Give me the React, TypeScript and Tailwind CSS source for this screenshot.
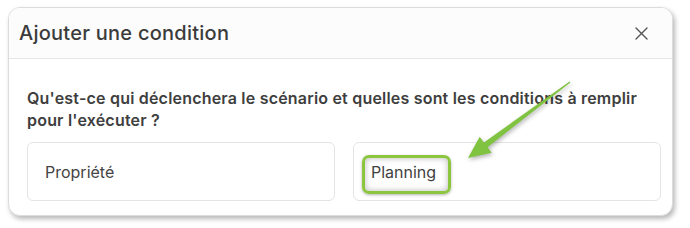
import React from "react";

export default function App() {
  return (
    <div
      className="relative w-[690px] h-[228px] bg-white overflow-hidden"
      style={{ fontFamily: "Inter, 'Noto Sans', sans-serif" }}
    >
      <div className="absolute left-[8px] top-[7px] w-[665px] h-[209px] rounded-[12px] border border-[#dcdcdc] bg-white shadow-[2px_3px_5px_rgba(0,0,0,0.28)] flex flex-col overflow-hidden">
        <div className="h-[51px] shrink-0 flex items-center justify-between pl-[10px] pr-[24px] border-b border-[#e6e6e6] bg-[#fcfcfc]">
          <span className="text-[20px] font-medium tracking-[0.25px] text-[#3b3b3b]">Ajouter une condition</span>
          <svg width="13" height="13" viewBox="0 0 13 13" className="text-[#555]">
            <path d="M1 1L12 12M12 1L1 12" stroke="currentColor" strokeWidth="1.4" strokeLinecap="round" />
          </svg>
        </div>
        <div className="flex-1 flex flex-col pl-[18px] pr-[11px] pt-[28px]">
          <p className="text-[16px] leading-[22px] font-semibold tracking-[0.2px] text-[#3e3e3e]">
            Qu'est-ce qui déclenchera le scénario et quelles sont les conditions à remplir pour l'exécuter ?
          </p>
          <div className="grid grid-cols-2 gap-[18px] mt-[11px]">
            <div className="h-[59px] rounded-[6px] border border-[#e4e4e4] flex items-center px-[17px]">
              <span className="text-[16px] text-[#444]">Propriété</span>
            </div>
            <div className="relative h-[59px] rounded-[6px] border border-[#e4e4e4] flex items-center px-[17px]">
              <span className="text-[16px] text-[#3f3f3f] relative z-10">Planning</span>
              <div className="absolute left-[8px] top-[12px] w-[89px] h-[39px] rounded-[7px] border-[3px] border-[#8cc63f] shadow-[inset_0_0_6px_rgba(0,0,0,0.28),0_1px_3px_rgba(0,0,0,0.3)]" />
            </div>
          </div>
        </div>
      </div>
      <svg
        className="absolute left-0 top-0 pointer-events-none"
        width="690"
        height="228"
        style={{ filter: "drop-shadow(1px 2px 2px rgba(0,0,0,0.3))" }}
      >
        <polygon
          points="570.4,82.4 487.5,147.2 491.7,152.8 468,158 479.7,136.8 483.9,142.4 569.6,81.6"
          fill="#80c341"
        />
      </svg>
    </div>
  );
}
